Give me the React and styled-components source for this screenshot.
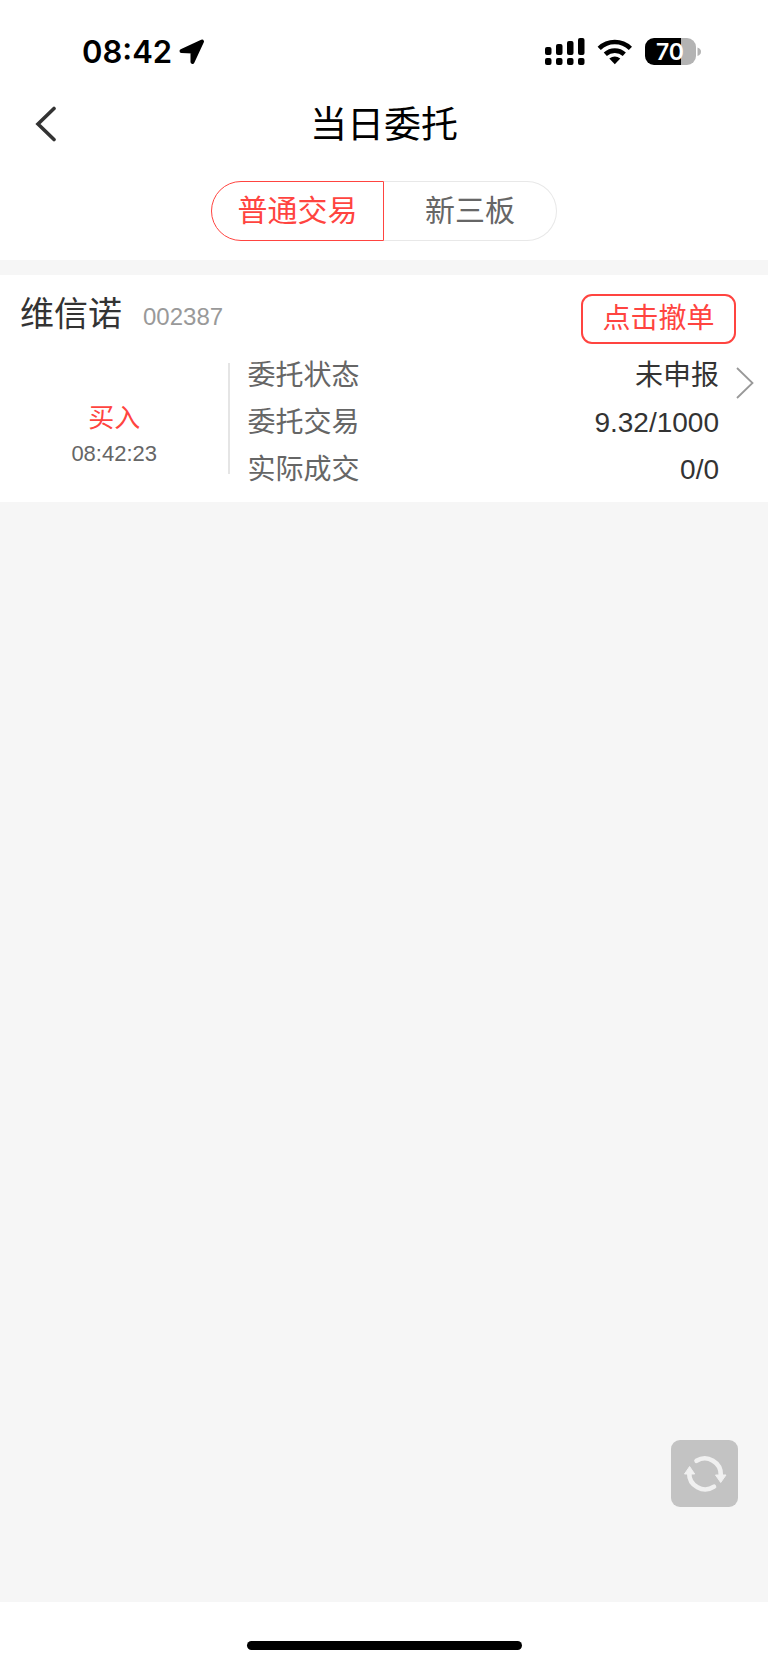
import React, { useState } from 'react';
import styled, { createGlobalStyle } from 'styled-components';

const GlobalStyle = createGlobalStyle`
  :root {
    --red: #ff4440;
    --text: #333;
    --text-muted: #666;
    --text-light: #999;
    --page: #f6f6f6;
  }

  * {
    box-sizing: border-box;
  }

  body {
    margin: 0;
    background: #fff;
    color: var(--text);
    font-family: 'Liberation Sans', 'Noto Sans CJK SC', sans-serif;
  }

  button {
    padding: 0;
    border: none;
    background: none;
    font-family: inherit;
    cursor: pointer;
  }

  svg {
    display: block;
  }
`;

const Page = styled.div`
  display: flex;
  flex-direction: column;
  min-height: 100vh;
`;

const StatusBar = styled.div`
  display: flex;
  align-items: center;
  justify-content: space-between;
  height: 88px;
  padding: 16px 67px 0 82px;
  color: #000;

  .time, .signals {
    display: flex;
    align-items: center;
  }

  .time {
    gap: 7px;
    font: 600 31px/40px Inter, sans-serif;
  }

  .signals {
    gap: 12px;
  }
`;

const NavBar = styled.header`
  display: grid;
  grid-template-columns: 80px 1fr 80px;
  align-items: center;
  height: 72px;

  h1 {
    margin: 0;
    padding-top: 4px;
    color: #000;
    font-size: 37px;
    font-weight: 400;
    line-height: 48px;
    text-align: center;
  }
`;

const BackButton = styled.button`
  padding-left: 34px;
`;

const Tabs = styled.div`
  display: flex;
  justify-content: center;
  padding: 21px 0 19px;
`;

const Tab = styled.button`
  width: 173px;
  height: 60px;
  padding-bottom: 6px;
  border: 1px solid ${({ $active }) => ($active ? 'var(--red)' : '#e8e8e8')};
  color: ${({ $active }) => ($active ? 'var(--red)' : 'var(--text-muted)')};
  font-size: 30px;

  &:first-child {
    border-radius: 30px 0 0 30px;
    border-right-width: ${({ $active }) => ($active ? '1px' : '0')};
  }

  &:last-child {
    border-radius: 0 30px 30px 0;
    border-left-width: ${({ $active }) => ($active ? '1px' : '0')};
  }
`;

const Main = styled.main`
  position: relative;
  flex: 1;
  padding-top: 15px;
  background: var(--page);
`;

const Card = styled.article`
  padding: 19px 0 9px;
  background: #fff;
`;

const CardHeader = styled.div`
  display: flex;
  align-items: flex-start;
  padding: 0 32px 8px 20px;

  h2 {
    margin: 0 21px 0 0;
    font-size: 34px;
    font-weight: 400;
    line-height: 40px;
  }

  .code {
    flex: 1;
    color: var(--text-light);
    font-size: 24px;
    line-height: 46px;
  }
`;

const CancelButton = styled.button`
  width: 155px;
  height: 50px;
  padding-bottom: 6px;
  border: 2px solid var(--red);
  border-radius: 11px;
  color: var(--red);
  font-size: 28px;
`;

const CardBody = styled.div`
  display: grid;
  grid-template-columns: 3fr 7fr;
`;

const Side = styled.div`
  margin: 11px 0 19px;
  padding-top: 37px;
  border-right: 2px solid #e5e5e5;
  color: var(--text-muted);
  font-size: 22px;
  line-height: 36px;
  text-align: center;

  .action {
    color: var(--red);
    font-size: 26px;
  }
`;

const Details = styled.div`
  display: flex;
  align-items: flex-start;
  padding: 0 14px 0 17px;

  dl {
    flex: 1;
    margin: 0;
  }
`;

const DetailRow = styled.div`
  display: flex;
  justify-content: space-between;
  font-size: 28px;
  line-height: 47px;

  dt {
    color: var(--text-muted);
  }

  dd {
    margin: 0;
  }
`;

const MoreLink = styled.a`
  padding: 14px 0 0 17px;
`;

const RefreshButton = styled.button`
  position: absolute;
  right: 30px;
  bottom: 95px;
  width: 67px;
  height: 67px;
  border-radius: 9px;
  background: #c3c3c3;
`;

const HomeBar = styled.footer`
  display: flex;
  align-items: flex-end;
  justify-content: center;
  height: 63px;
  padding-bottom: 15px;

  &:after {
    content: '';
    width: 275px;
    height: 9px;
    border-radius: 5px;
    background: #000;
  }
`;

const tabs = ['普通交易', '新三板'];

const orders = [
  {
    id: 1,
    name: '维信诺',
    code: '002387',
    action: '买入',
    time: '08:42:23',
    details: [
      { label: '委托状态', value: '未申报' },
      { label: '委托交易', value: '9.32/1000' },
      { label: '实际成交', value: '0/0' },
    ],
  },
];

function LocationIcon() {
  return (
    <svg width="26" height="26" viewBox="0 0 26 26">
      <path d="M2.500 12 23 2.500 13.500 23V12.500Z" fill="#000" stroke="#000" strokeWidth="4" strokeLinejoin="round" />
    </svg>
  );
}

function SignalIcon() {
  const bars = [8, 11, 14, 17];
  return (
    <svg width="40" height="28" viewBox="0 0 40 28">
      {bars.map((height, i) => (
        <g key={height}>
          <rect x={i * 11} y={17 - height} width="6.500" height={height} rx="2" />
          <rect x={i * 11} y="20" width="6.500" height="7" rx="2" />
        </g>
      ))}
    </svg>
  );
}

function WifiIcon() {
  return (
    <svg width="36" height="28" viewBox="0 0 36 28">
      <g fill="none" stroke="#000" strokeWidth="4.600">
        <path d="M2.200 10.300a22.500 22.500 0 0 1 31.200 0" />
        <path d="M8.300 16.300a14 14 0 0 1 19 0" />
      </g>
      <path d="M12.300 20.600q5.500-4.400 11 0L17.800 26.200Z" />
    </svg>
  );
}

function BatteryIcon() {
  return (
    <svg width="56" height="28" viewBox="0 0 56 28">
      <path d="M36 0h6a9 9 0 0 1 9 9v9a9 9 0 0 1-9 9h-6Z" fill="#b3b3b3" />
      <path d="M9 0h27v27H9a9 9 0 0 1-9-9V9a9 9 0 0 1 9-9Z" />
      <path d="M52.500 9.500q3.500 1.200 3.500 4.200t-3.500 4.200Z" fill="#b3b3b3" />
      <text x="25" y="22" textAnchor="middle" fill="#fff" fontFamily="Inter, sans-serif" fontSize="23" fontWeight="600">70</text>
    </svg>
  );
}

function RefreshIcon() {
  return (
    <svg width="67" height="67" viewBox="0 0 67 67">
      <g fill="none" stroke="#f0f0f0" strokeWidth="4.600" strokeLinecap="round">
        <path d="M25.500 20.800A16 16 0 0 1 49.800 35" />
        <path d="M43 46.700A16 16 0 0 1 18.200 33" />
      </g>
      <path d="M44.500 35h10.500L49.700 42.500ZM13.500 34h10.200L18.600 26.500Z" fill="#f0f0f0" stroke="#f0f0f0" strokeLinejoin="round" />
    </svg>
  );
}

function Order({ order }) {
  return (
    <Card>
      <CardHeader>
        <h2>{order.name}</h2>
        <span className="code">{order.code}</span>
        <CancelButton type="button">点击撤单</CancelButton>
      </CardHeader>
      <CardBody>
        <Side>
          <div className="action">{order.action}</div>
          <div>{order.time}</div>
        </Side>
        <Details>
          <dl>
            {order.details.map(({ label, value }) => (
              <DetailRow key={label}>
                <dt>{label}</dt>
                <dd>{value}</dd>
              </DetailRow>
            ))}
          </dl>
          <MoreLink href="#order" aria-label="委托详情">
            <svg width="18" height="34" viewBox="0 0 18 34">
              <path d="M1 2 16.500 17 1 32" fill="none" stroke="#999" strokeWidth="1.800" />
            </svg>
          </MoreLink>
        </Details>
      </CardBody>
    </Card>
  );
}

export default function App() {
  const [active, setActive] = useState(0);

  return (
    <Page>
      <GlobalStyle />
      <StatusBar>
        <div className="time">
          08:42
          <LocationIcon />
        </div>
        <div className="signals">
          <SignalIcon />
          <WifiIcon />
          <BatteryIcon />
        </div>
      </StatusBar>
      <NavBar>
        <BackButton type="button" aria-label="返回">
          <svg width="24" height="36" viewBox="0 0 24 36">
            <path d="M20 2.500 4 18 20 33.500" fill="none" stroke="#333" strokeWidth="3.600" strokeLinecap="round" />
          </svg>
        </BackButton>
        <h1>当日委托</h1>
      </NavBar>
      <Tabs>
        {tabs.map((tab, i) => (
          <Tab key={tab} type="button" $active={i === active} onClick={() => setActive(i)}>{tab}</Tab>
        ))}
      </Tabs>
      <Main>
        {orders.map((order) => (
          <Order key={order.id} order={order} />
        ))}
        <RefreshButton type="button" aria-label="刷新">
          <RefreshIcon />
        </RefreshButton>
      </Main>
      <HomeBar />
    </Page>
  );
}
